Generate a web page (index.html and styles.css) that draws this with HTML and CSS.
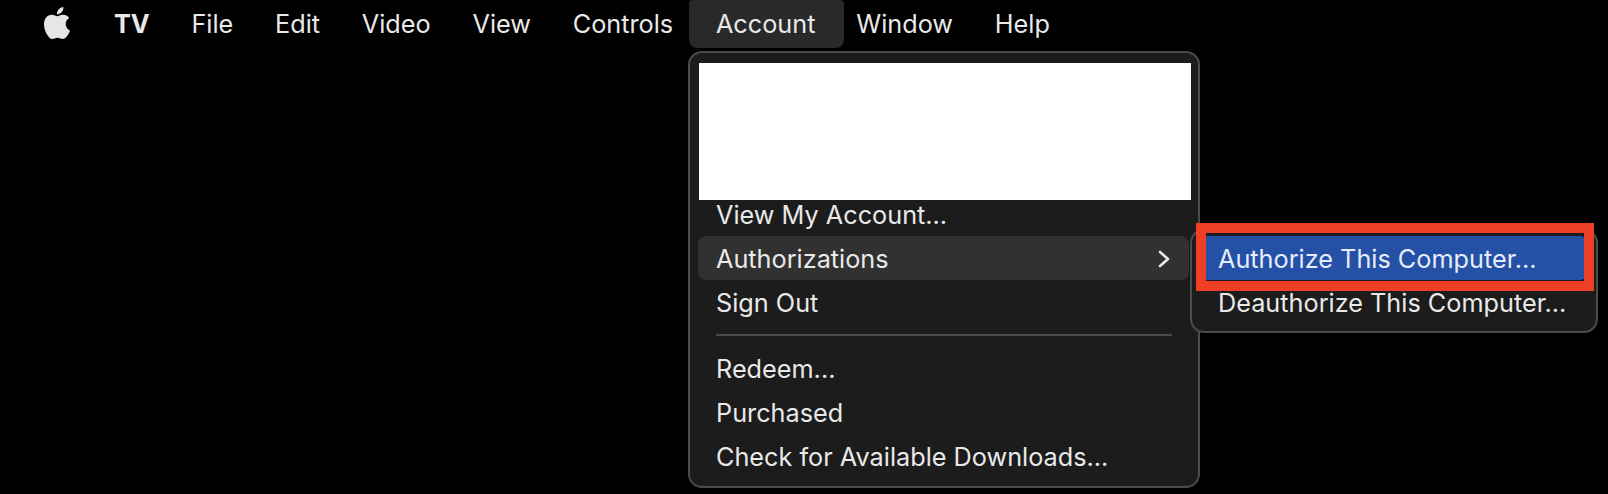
FILE: index.html
```html
<!DOCTYPE html>
<html lang="en">
<head>
<meta charset="utf-8">
<title>TV Account menu</title>
<link rel="stylesheet" href="styles.css">
</head>
<body>
<div class="page">
  <nav class="menubar">
    <svg class="apple" viewBox="0 0 24 24" aria-hidden="true"><path d="M12.152 6.896c-.948 0-2.415-1.078-3.96-1.04-2.04.027-3.91 1.183-4.961 3.014-2.117 3.675-.546 9.103 1.519 12.09 1.013 1.454 2.208 3.09 3.792 3.039 1.52-.065 2.09-.987 3.935-.987 1.831 0 2.35.987 3.96.948 1.637-.026 2.676-1.48 3.676-2.948 1.156-1.688 1.636-3.325 1.662-3.415-.039-.013-3.182-1.221-3.22-4.857-.026-3.04 2.48-4.494 2.597-4.559-1.429-2.09-3.623-2.324-4.39-2.376-2-.156-3.675 1.09-4.61 1.09zM15.53 3.83c.843-1.012 1.4-2.427 1.245-3.83-1.207.052-2.662.805-3.532 1.818-.78.896-1.454 2.338-1.273 3.714 1.338.104 2.715-.688 3.559-1.701"/></svg>
    <span class="bar-item app-name">TV</span>
    <span class="bar-item">File</span>
    <span class="bar-item">Edit</span>
    <span class="bar-item">Video</span>
    <span class="bar-item">View</span>
    <span class="bar-item">Controls</span>
    <span class="bar-item is-open">Account</span>
    <span class="bar-item">Window</span>
    <span class="bar-item">Help</span>
  </nav>

  <div class="menu account-menu">
    <div class="redacted"></div>
    <ul class="menu-list">
      <li class="row">View My Account...</li>
      <li class="row is-active">
        <span>Authorizations</span>
        <svg class="chevron" viewBox="0 0 12 18" aria-hidden="true"><path d="M2 2l8 7-8 7"/></svg>
        <div class="menu submenu">
          <ul class="menu-list">
            <li class="row is-selected">Authorize This Computer...</li>
            <li class="row">Deauthorize This Computer...</li>
          </ul>
          <div class="callout"></div>
        </div>
      </li>
      <li class="row">Sign Out</li>
      <li class="separator"></li>
      <li class="row">Redeem...</li>
      <li class="row">Purchased</li>
      <li class="row">Check for Available Downloads...</li>
    </ul>
  </div>
</div>
</body>
</html>
```

FILE: styles.css
```css
* { box-sizing: border-box; }

html, body {
  margin: 0;
  background: #000;
}

.page {
  position: relative;
  width: 1608px;
  height: 494px;
  overflow: hidden;
  background: #000;
  color: #e9e9e9;
  font-family: Inter, "Liberation Sans", sans-serif;
  font-size: 25.25px;
}

.menubar {
  display: flex;
  align-items: center;
  height: 48px;
  padding-left: 41px;
}

.apple {
  width: 32px;
  height: 32px;
  margin: -3px 20px 0 0;
  fill: #e6e6e6;
  flex: none;
}

.bar-item {
  padding: 0 20.9px;
  line-height: 48px;
  white-space: nowrap;
}

.app-name {
  font-weight: 700;
}

.is-open {
  padding: 0 29px 0 27px;
  margin: 0 -9.1px 0 -5.1px;
  background: #292929;
  border-radius: 4px 4px 8px 8px;
}

.menu {
  position: absolute;
  background: #1c1c1c;
  border: 2px solid #4b4b4b;
  border-radius: 14px;
}

.account-menu {
  left: 688px;
  top: 51px;
  width: 512px;
  height: 437px;
  padding: 10px 7px 8px;
}

.redacted {
  position: relative;
  z-index: 1;
  height: 137px;
  margin: 0 0 0 2px;
  background: #fff;
}

.menu-list {
  list-style: none;
  margin: -8px 0 0;
  padding: 0;
}

.row {
  position: relative;
  display: flex;
  align-items: center;
  justify-content: space-between;
  height: 44px;
  padding: 1px 19px 0;
  white-space: nowrap;
  border-radius: 8px;
}

.is-active {
  margin: 0 2px 0 1px;
  padding-left: 18px;
  background: #313131;
}

.chevron {
  width: 12px;
  height: 18px;
  fill: none;
  stroke: #e8e8e8;
  stroke-width: 2.6;
  stroke-linecap: round;
  stroke-linejoin: round;
}

.separator {
  height: 2px;
  margin: 10px 19px 10px 19px;
  background: #4a4a4a;
}

.submenu {
  left: 492px;
  top: -7px;
  width: 408px;
  height: 104px;
  padding: 5px 10px 0;
}

.submenu .menu-list {
  margin: 0;
}

.submenu .row {
  padding: 1px 16px 0;
}

.is-selected {
  background: #2451a5;
  color: #e6ecfa;
  border-radius: 6px;
}

.callout {
  position: absolute;
  left: 4px;
  top: -8px;
  width: 398px;
  height: 68px;
  border: 10px solid #ee3e26;
}
```
